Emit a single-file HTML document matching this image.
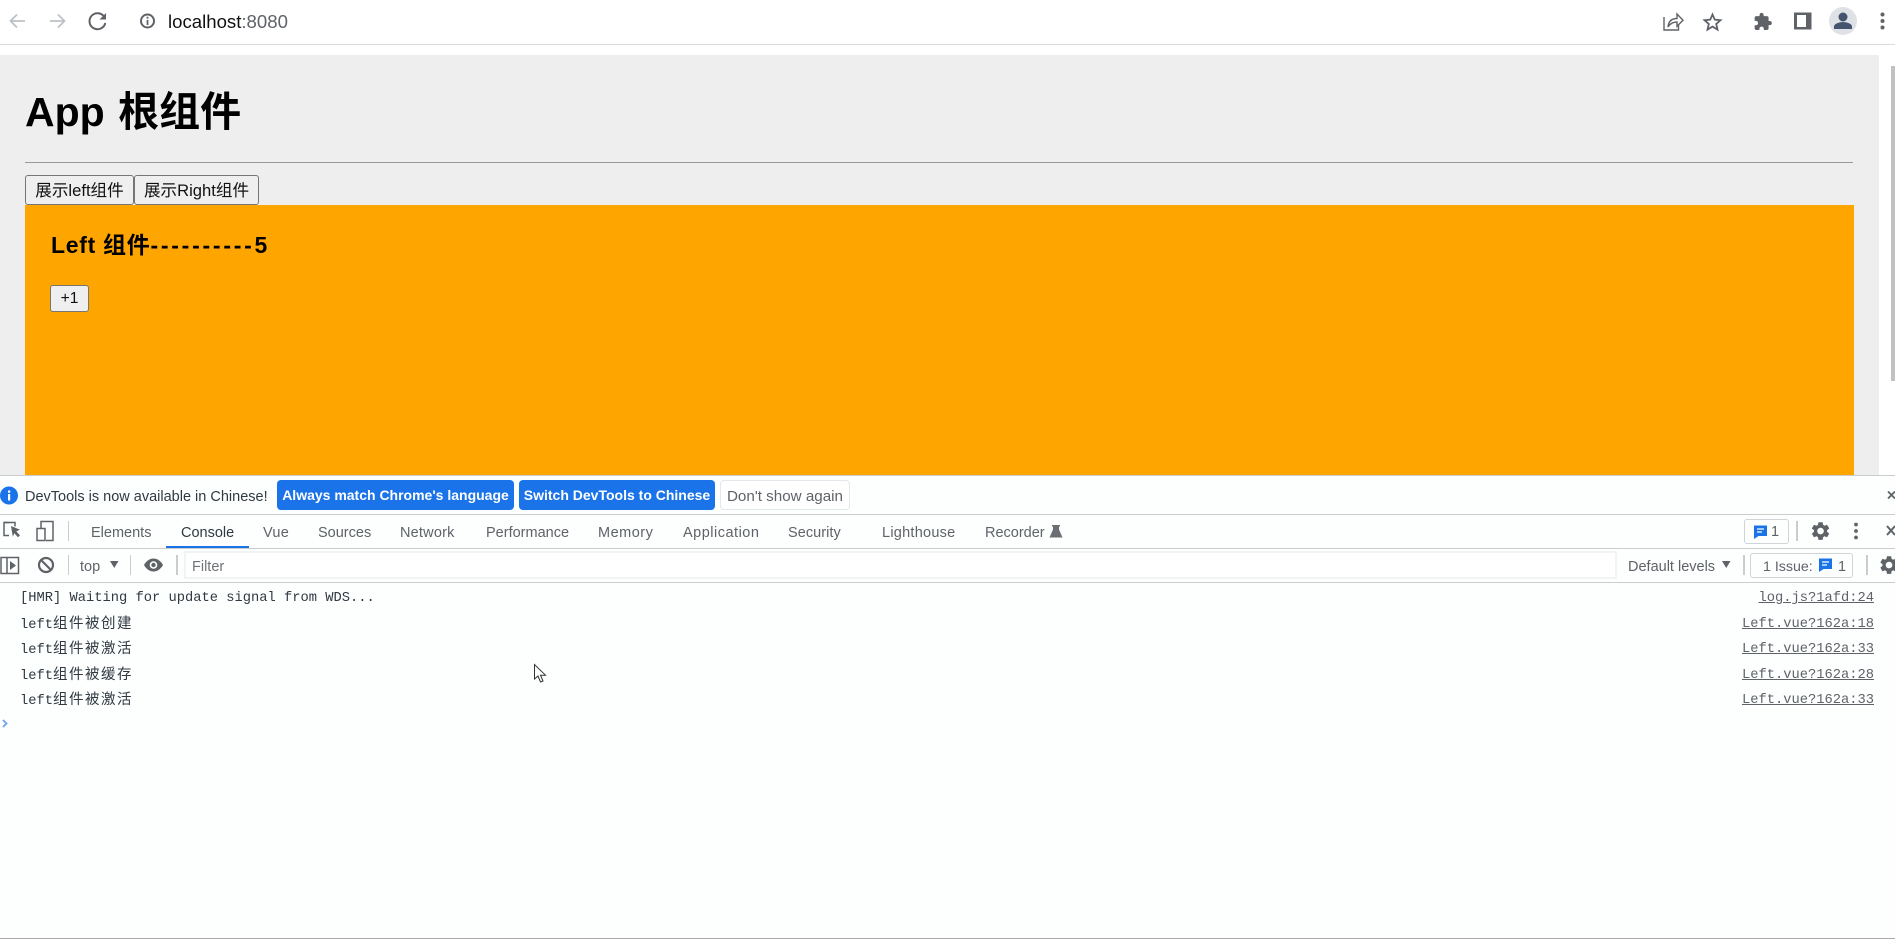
<!DOCTYPE html>
<html lang="en">
<head>
<meta charset="utf-8">
<title>localhost:8080</title>
<style>
html,body{margin:0;padding:0;width:1895px;height:939px;overflow:hidden;background:#fff;}
body{position:relative;font-family:"Liberation Sans","Noto Sans CJK SC",sans-serif;}
.b{position:absolute;box-sizing:border-box;}
.t{position:absolute;white-space:nowrap;}
.tab{position:absolute;top:522px;line-height:22px;font-size:14.5px;color:#5f6368;white-space:nowrap;}
.log{position:absolute;left:20px;height:20px;line-height:20px;font-family:"Liberation Mono","Noto Sans CJK SC",monospace;font-size:13.75px;color:#303942;white-space:nowrap;}
.log i{font-style:normal;font-family:"Liberation Sans","WenQuanYi Zen Hei","Noto Sans CJK SC",sans-serif;font-size:14.5px;letter-spacing:1.5px;color:#303942;}
.src{position:absolute;right:21px;height:20px;line-height:20px;font-family:"Liberation Mono",monospace;font-size:13.75px;color:#5f6368;text-decoration:underline;white-space:nowrap;}
.btn{position:absolute;box-sizing:border-box;background:#efefef;border:1px solid #767676;border-radius:3px;font-size:16.6px;line-height:29px;text-align:center;color:#111;white-space:nowrap;}
.blue{position:absolute;top:480px;height:30px;background:#1a73e8;border-radius:4px;color:#fff;font-weight:bold;font-size:14px;line-height:30px;text-align:center;white-space:nowrap;}
</style>
</head>
<body>
<!-- browser toolbar -->
<div class="b" style="left:0;top:44px;width:1895px;height:1px;background:#dadce0"></div>
<div class="t" style="left:168px;top:9.5px;font-size:18.6px;line-height:24px;color:#111">localhost<span style="color:#5f6368">:8080</span></div>

<!-- page -->
<div class="b" style="left:0;top:55px;width:1879px;height:420px;background:#eee"></div>
<div class="b" style="left:1891px;top:66px;width:4px;height:315px;background:#c1c1c1"></div>
<div class="t" style="left:25px;top:87px;font-size:41px;line-height:50px;font-weight:bold;color:#000;word-spacing:2px">App 根组件</div>
<div class="b" style="left:25px;top:162px;width:1828px;height:1px;background:#999"></div>
<div class="btn" style="left:25px;top:174.5px;width:109px;height:30px">展示left组件</div>
<div class="btn" style="left:134px;top:174.5px;width:125px;height:30px">展示Right组件</div>
<div class="b" style="left:25px;top:205px;width:1829px;height:270px;background:#ffa500"></div>
<div class="t" style="left:51px;top:230px;font-size:23px;line-height:30px;font-weight:bold;color:#000"><span style="letter-spacing:.7px">Left 组件</span><span style="letter-spacing:2.75px">----------</span>5</div>
<div class="btn" style="left:50px;top:285px;width:39px;height:27px;line-height:25px;font-size:15.6px">+1</div>

<!-- devtools -->
<div class="b" style="left:0;top:475px;width:1895px;height:464px;background:#fdfefe"></div>
<div class="b" style="left:0;top:475px;width:1895px;height:1px;background:#ccc"></div>
<div class="t" style="left:25px;top:486px;font-size:14.5px;line-height:22px;color:#303942">DevTools is now available in Chinese!</div>
<div class="blue" style="left:277px;width:237px">Always match Chrome's language</div>
<div class="blue" style="left:519px;width:196px">Switch DevTools to Chinese</div>
<div class="b" style="left:720px;top:480px;width:130px;height:30px;border:1px solid #e3e6ea;border-radius:4px;background:#fff;color:#5f6368;font-size:15.2px;font-weight:normal;line-height:31px;text-align:center;white-space:nowrap">Don't show again</div>
<div class="b" style="left:0;top:514px;width:1895px;height:1px;background:#ccc"></div>

<div class="tab" style="left:91px">Elements</div>
<div class="tab" style="left:181px;color:#303942">Console</div>
<div class="tab" style="left:263px;letter-spacing:.3px">Vue</div>
<div class="tab" style="left:318px">Sources</div>
<div class="tab" style="left:400px;letter-spacing:.2px">Network</div>
<div class="tab" style="left:486px">Performance</div>
<div class="tab" style="left:598px;letter-spacing:.5px">Memory</div>
<div class="tab" style="left:683px;letter-spacing:.5px">Application</div>
<div class="tab" style="left:788px;letter-spacing:.05px">Security</div>
<div class="tab" style="left:882px;letter-spacing:.25px">Lighthouse</div>
<div class="tab" style="left:985px">Recorder</div>
<div class="b" style="left:166px;top:546px;width:83px;height:3px;background:#1a73e8"></div>
<div class="b" style="left:0;top:548px;width:1895px;height:1px;background:#ccc"></div>
<div class="b" style="left:0;top:582px;width:1895px;height:1px;background:#ccc"></div>

<div class="b" style="left:1744px;top:519px;width:45px;height:25px;border:1px solid #d0d3d7;border-radius:3px"></div>
<div class="t" style="left:1771px;top:521px;font-size:14.5px;line-height:22px;color:#5f6368">1</div>

<div class="b" style="left:184px;top:551px;width:1433px;height:28px;border:2px solid #f1f3f4;background:#fff"></div>
<div class="t" style="left:192px;top:556px;font-size:14.5px;line-height:22px;color:#6f7377">Filter</div>
<div class="t" style="left:80px;top:556px;font-size:14.5px;line-height:22px;color:#5f6368">top</div>
<div class="t" style="left:1628px;top:556px;font-size:14.5px;line-height:22px;color:#5f6368">Default levels</div>
<div class="b" style="left:1750px;top:553px;width:103px;height:25px;border:1px solid #d0d3d7;border-radius:3px"></div>
<div class="t" style="left:1763px;top:556px;font-size:14.2px;line-height:22px;color:#5f6368">1 Issue:</div>
<div class="t" style="left:1838px;top:556px;font-size:14.5px;line-height:22px;color:#5f6368">1</div>

<!-- console -->
<div class="log" style="top:589px">[HMR] Waiting for update signal from WDS...</div>
<div class="log" style="top:614px">left<i>组件被创建</i></div>
<div class="log" style="top:639px">left<i>组件被激活</i></div>
<div class="log" style="top:665px">left<i>组件被缓存</i></div>
<div class="log" style="top:690px">left<i>组件被激活</i></div>
<div class="src" style="top:589px">log.js?1afd:24</div>
<div class="src" style="top:615px">Left.vue?162a:18</div>
<div class="src" style="top:640px">Left.vue?162a:33</div>
<div class="src" style="top:666px">Left.vue?162a:28</div>
<div class="src" style="top:691px">Left.vue?162a:33</div>
<div class="b" style="left:0;top:938px;width:1895px;height:1px;background:#a9a9a9"></div>

<!-- icons -->
<svg class="b" style="left:0;top:0" width="1895" height="939" viewBox="0 0 1895 939" xmlns="http://www.w3.org/2000/svg">
  <g fill="none" stroke="#bdc1c6" stroke-width="1.8">
    <path d="M25 21H11M17 14.5L10.5 21l6.5 6.5"/>
    <path d="M50 21h14.500M58 14.500l6.500 6.500-6.500 6.500"/>
  </g>
  <path d="M104.300 17A8 8 0 1 0 105.300 23" fill="none" stroke="#5f6368" stroke-width="2"/>
  <path d="M106 13v6.500h-6.500z" fill="#5f6368"/>
  <circle cx="147.500" cy="21" r="6.500" fill="none" stroke="#5f6368" stroke-width="2"/>
  <path d="M146.600 20h1.800v5h-1.800zM146.600 16.800h1.800v1.800h-1.800z" fill="#5f6368"/>

  <g fill="none" stroke="#5f6368" stroke-width="1.400">
    <path d="M1664 17v13h14.500v-5"/>
    <path d="M1668 27c.5-5.500 3.500-8.500 9-8.500V14l6 6.300-6 6v-4.300c-4 0-6.800 1.300-9 5z"/>
    <path stroke-width="1.800" d="M1712.500 14.500l2.300 5.200 5.700.5-4.300 3.800 1.300 5.600-5-3-5 3 1.300-5.600-4.300-3.800 5.700-.5z"/>
  </g>
  <path transform="translate(1753 12) scale(.82)" fill="#5f6368" d="M20.500 11H19V7c0-1.100-.9-2-2-2h-4V3.500C13 2.120 11.880 1 10.500 1S8 2.120 8 3.500V5H4c-1.100 0-1.990.9-1.990 2v3.800H3.500c1.490 0 2.700 1.210 2.700 2.700s-1.210 2.700-2.700 2.700H2V20c0 1.100.9 2 2 2h3.800v-1.500c0-1.490 1.210-2.700 2.700-2.700 1.490 0 2.700 1.210 2.700 2.700V22H17c1.100 0 2-.9 2-2v-4h1.500c1.380 0 2.500-1.120 2.500-2.500S21.880 11 20.500 11z"/>
  <path fill-rule="evenodd" fill="#5f6368" d="M1794 12.500h17.500v17H1794zM1797 15v12h9V15z"/>
  <circle cx="1843" cy="21" r="14" fill="#dee1e6"/>
  <circle cx="1843" cy="17" r="4.500" fill="#44546f"/>
  <path d="M1834 29v-2.500c0-3 6-4.500 9-4.500s9 1.500 9 4.500V29z" fill="#44546f"/>
  <g fill="#5f6368"><circle cx="1882.500" cy="14.500" r="2"/><circle cx="1882.500" cy="21" r="2"/><circle cx="1882.500" cy="27.500" r="2"/></g>

  <!-- infobar -->
  <circle cx="9" cy="495.500" r="9" fill="#1a73e8"/>
  <path d="M8 494h2.200v6.500H8zM8 490.500h2.200v2.200H8z" fill="#fff"/>
  <path d="M1888 491.500l7 7M1895 491.500l-7 7" stroke="#5f6368" stroke-width="1.800" fill="none"/>

  <!-- tab icons -->
  <g fill="none" stroke="#5f6368" stroke-width="1.500">
    <path d="M9 522.500H4v13h5"/>
    <path d="M4 522.500h11v4"/>
    <path d="M37 528.500h8v12h-8zM41 528v-6.500h12v19h-7"/>
  </g>
  <path d="M11 526l9 3.800-3.700 1.600 3.700 4-2 1.800-3.700-4-1.500 3.500z" fill="#5f6368"/>
  <path d="M68.500 521v20" stroke="#ccc" stroke-width="1"/>
  <path d="M1052 525h8v1.500h-1v3l3.500 8h-13l3.500-8v-3h-1z" fill="#6b6e72"/>

  <!-- chat icon top -->
  <path d="M1754 525.500h13v10.500h-8.500l-4.500 3z" fill="#1a73e8"/>
  <path d="M1757 529h7M1757 532h5" stroke="#fff" stroke-width="1.300"/>
  <path d="M1797 521v20" stroke="#ccc" stroke-width="2"/>
  <path transform="translate(1809.500 520) scale(.92)" fill="#5f6368" d="M19.140 12.940c.04-.3.06-.61.06-.94 0-.32-.02-.64-.07-.94l2.030-1.580a.49.49 0 0 0 .12-.61l-1.920-3.320a.488.488 0 0 0-.59-.22l-2.390.96c-.5-.38-1.030-.7-1.620-.94l-.36-2.540a.484.484 0 0 0-.48-.41h-3.840c-.24 0-.43.17-.47.41l-.36 2.540c-.59.24-1.130.57-1.620.94l-2.390-.96c-.22-.08-.47 0-.59.22L2.740 8.870c-.12.21-.08.47.12.61l2.030 1.580c-.05.3-.09.63-.09.94s.02.64.07.94l-2.030 1.580a.49.49 0 0 0-.12.61l1.920 3.320c.12.22.37.29.59.22l2.390-.96c.5.38 1.030.7 1.620.94l.36 2.540c.05.24.24.41.48.41h3.840c.24 0 .44-.17.47-.41l.36-2.540c.59-.24 1.130-.56 1.620-.94l2.390.96c.22.08.47 0 .59-.22l1.920-3.320c.12-.22.07-.47-.12-.61l-2.010-1.580zM12 15.600c-1.980 0-3.600-1.620-3.600-3.600s1.620-3.600 3.600-3.600 3.600 1.620 3.600 3.600-1.620 3.600-3.600 3.600z"/>
  <g fill="#5f6368"><circle cx="1856" cy="524.500" r="1.900"/><circle cx="1856" cy="531" r="1.900"/><circle cx="1856" cy="537.500" r="1.900"/></g>
  <path d="M1887 526l8 9M1895 526l-8 9" stroke="#5f6368" stroke-width="2" fill="none"/>

  <!-- console toolbar -->
  <path d="M1 557.500h17.500v16H1zM7 557.500v16" fill="none" stroke="#5f6368" stroke-width="1.500"/>
  <path d="M10 561l6 4.500-6 4.500z" fill="#5f6368"/>
  <circle cx="46" cy="565" r="7" fill="none" stroke="#5f6368" stroke-width="2.200"/>
  <path d="M41 560l10 10" stroke="#5f6368" stroke-width="2.200"/>
  <path d="M68.500 555v20M130.500 555v20" stroke="#ccc" stroke-width="1"/>
  <path d="M110 561h8.500l-4.250 7z" fill="#5f6368"/>
  <path d="M144 565c2.500-4.500 6-6.500 9.500-6.500s7 2 9.500 6.500c-2.500 4.500-6 6.500-9.500 6.500s-7-2-9.500-6.500z" fill="#5f6368"/>
  <circle cx="153.500" cy="565" r="3.800" fill="#fff"/>
  <circle cx="153.500" cy="565" r="2.200" fill="#5f6368"/>
  <path d="M177 555v20" stroke="#ccc" stroke-width="2"/>
  <path d="M1722 561h8.500l-4.250 7z" fill="#5f6368"/>
  <path d="M1744 555v20M1867 555v20" stroke="#ccc" stroke-width="2"/>
  <path d="M1819 558.500h13v10.500h-8.500l-4.500 3z" fill="#1a73e8"/>
  <path d="M1822 562h7M1822 565h5" stroke="#fff" stroke-width="1.300"/>
  <path transform="translate(1878 554) scale(.92)" fill="#5f6368" d="M19.140 12.940c.04-.3.06-.61.06-.94 0-.32-.02-.64-.07-.94l2.030-1.580a.49.49 0 0 0 .12-.61l-1.920-3.320a.488.488 0 0 0-.59-.22l-2.390.96c-.5-.38-1.030-.7-1.620-.94l-.36-2.540a.484.484 0 0 0-.48-.41h-3.840c-.24 0-.43.17-.47.41l-.36 2.540c-.59.24-1.130.57-1.620.94l-2.390-.96c-.22-.08-.47 0-.59.22L2.740 8.870c-.12.21-.08.47.12.61l2.030 1.580c-.05.3-.09.63-.09.94s.02.64.07.94l-2.030 1.580a.49.49 0 0 0-.12.61l1.920 3.320c.12.22.37.29.59.22l2.390-.96c.5.38 1.030.7 1.620.94l.36 2.540c.05.24.24.41.48.41h3.840c.24 0 .44-.17.47-.41l.36-2.540c.59-.24 1.130-.56 1.620-.94l2.390.96c.22.08.47 0 .59-.22l1.920-3.320c.12-.22.07-.47-.12-.61l-2.010-1.580zM12 15.600c-1.980 0-3.600-1.620-3.600-3.600s1.620-3.600 3.600-3.600 3.600 1.620 3.600 3.600-1.620 3.600-3.600 3.600z"/>

  <!-- prompt + cursor -->
  <path d="M3 720l3.500 3.500L3 727" fill="none" stroke="#6ea2ee" stroke-width="1.800"/>
  <path d="M534.500 664.500v14.500l3.500-3 2.500 6 2.500-1-2.500-5.800h5z" fill="#fff" stroke="#333" stroke-width="1"/>
</svg>
</body>
</html>
